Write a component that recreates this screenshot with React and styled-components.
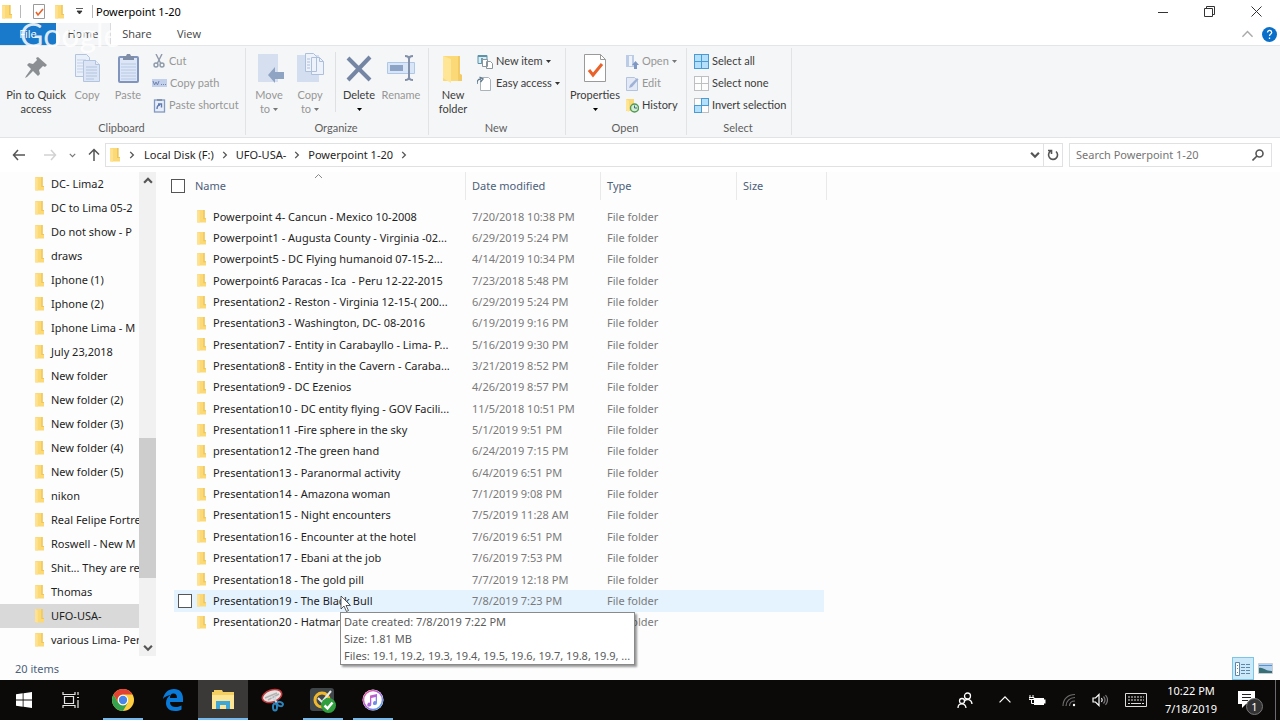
import React, { useState } from 'react';
import styled, { createGlobalStyle } from 'styled-components';

const GlobalStyle = createGlobalStyle`
    * {
        box-sizing: border-box;
    }

    body {
        margin: 0;
        background: #fff;
    }

    body, button, input, table {
        font-family: 'Noto Sans', 'Open Sans', sans-serif;
        font-size: 11px;
        line-height: 14px;
    }

    button {
        padding: 0;
        border: none;
        background: none;
        color: inherit;
    }

    a {
        color: inherit;
        text-decoration: none;
    }
`;

const Window = styled.div`
    display: flex;
    flex-direction: column;
    min-height: 100vh;
    color: #1f1f1f;
    background: #fdfdfd;
`;

/* ---------- title bar ---------- */

const TitleBar = styled.header`
    display: flex;
    align-items: center;
    height: 23px;
    padding-left: 2px;
    background: #fff;
`;

const QuickAccess = styled.div`
    display: flex;
    align-items: center;
    height: 23px;

    button {
        display: flex;
        align-items: center;
        justify-content: center;
        width: 20px;
        height: 22px;
    }
`;

const TitleDivider = styled.span`
    width: 1px;
    height: 13px;
    margin: 0 ${({ $space }) => $space}px;
    background: #b8b8b8;
`;

const WindowTitle = styled.h1`
    flex: 1;
    margin: 0;
    font-size: 11px;
    font-weight: 400;
    color: #000;
`;

const WindowButton = styled.button`
    display: flex;
    align-items: center;
    justify-content: center;
    width: 47px;
    height: 23px;
`;

const TabBar = styled.nav`
    position: relative;
    display: flex;
    align-items: stretch;
    height: 23px;
    background: #fff;
    border-bottom: 1px solid #e4e5e6;
`;

const Tab = styled.button`
    width: ${({ $file }) => ($file ? '56px' : '52px')};
    background: ${({ $file }) => ($file ? '#1979ca' : 'transparent')};
    color: ${({ $file }) => ($file ? '#fff' : '#444')};
    font-family: 'Open Sans', sans-serif;

    &[aria-selected='true'] {
        width: 55px;
        background: #f5f6f7;
        border-right: 1px solid #dadbdc;
    }
`;

const TabSpacer = styled.div`
    flex: 1;
`;

const HelpButton = styled.button`
    display: flex;
    align-items: center;
    justify-content: center;
    width: 22px;
`;

const Watermark = styled.div`
    position: absolute;
    top: -4px;
    left: 20px;
    z-index: 2;
    font-family: Lato, sans-serif;
    font-size: 32px;
    line-height: 32px;
    color: rgba(255, 255, 255, 0.85);
    pointer-events: none;
`;

/* ---------- ribbon ---------- */

const Ribbon = styled.section`
    display: flex;
    height: 92px;
    background: #f5f6f7;
    border-bottom: 1px solid #e2e3e4;

    button, div {
        font-family: Lato, sans-serif;
    }
`;

const RibbonGroup = styled.div`
    display: flex;
    flex-direction: column;
    justify-content: space-between;
    min-width: ${({ $width }) => $width}px;
    margin: 2px 0;
    padding: 2px 0 0 2px;
    border-right: 1px solid #e2e3e4;
`;

const GroupBody = styled.div`
    display: flex;
    align-items: flex-start;
`;

const GroupLabel = styled.div`
    margin-right: 4px;
    text-align: center;
    color: #5e5e5e;
`;

const BigButton = styled.button`
    display: flex;
    flex-direction: column;
    align-items: center;
    width: ${({ $width }) => $width}px;
    white-space: nowrap;
    color: #3c3c3c;

    svg {
        margin: 3px 0 5px;
    }

    &:disabled {
        color: #969696;
    }
`;

const ButtonLine = styled.span`
    display: flex;
    align-items: center;
    justify-content: center;
    gap: 3px;
    height: 14px;

    svg {
        margin: 0;
    }
`;

const GroupDivider = styled.span`
    width: 1px;
    height: 60px;
    margin: 2px 5px 0;
    background: #dfe0e2;
`;

const SmallButtons = styled.div`
    display: flex;
    flex-direction: column;
    align-items: flex-start;
    padding-left: ${({ $indent }) => $indent || 0}px;
`;

const SmallButton = styled.button`
    display: flex;
    align-items: center;
    gap: 3px;
    height: 22px;
    white-space: nowrap;
    color: #3c3c3c;

    &:disabled {
        color: #969696;
    }
`;

/* ---------- address bar ---------- */

const AddressRow = styled.div`
    display: flex;
    align-items: center;
    height: 34px;
    padding-right: 8px;
    background: #fff;
`;

const NavButton = styled.button`
    display: flex;
    align-items: center;
    justify-content: center;
    width: ${({ $width }) => $width}px;
    height: 24px;
`;

const AddressBox = styled.div`
    display: flex;
    flex: 1;
    align-items: center;
    height: 24px;
    padding: 0 0 0 4px;
    border: 1px solid #e0e1e3;
`;

const Crumbs = styled.ol`
    display: flex;
    flex: 1;
    align-items: center;
    margin: 0;
    padding: 0;
    list-style: none;

    li {
        display: flex;
        align-items: center;
    }
`;

const RefreshButton = styled(NavButton)`
    border: 1px solid #e0e1e3;
    border-left: none;
`;

const SearchBox = styled.label`
    display: flex;
    align-items: center;
    width: 203px;
    height: 24px;
    margin-left: 6px;
    padding: 0 7px 0 6px;
    border: 1px solid #e0e1e3;

    input {
        flex: 1;
        min-width: 0;
        padding: 0;
        border: none;
        outline: none;
        background: transparent;
    }

    input::placeholder {
        color: #757575;
        opacity: 1;
    }
`;

/* ---------- folders pane ---------- */

const Main = styled.main`
    display: flex;
    flex: 1;
    align-items: flex-start;
`;

const FolderPane = styled.nav`
    width: 139px;
    overflow: hidden;
`;

const FolderLink = styled.a`
    display: flex;
    align-items: center;
    gap: 7px;
    height: 24px;
    padding-left: 35px;
    white-space: nowrap;
    background: ${({ $active }) => ($active ? '#d9d9d9' : 'transparent')};

    svg {
        flex: none;
    }
`;

const ScrollTrack = styled.div`
    display: flex;
    flex-direction: column;
    width: 17px;
    height: 484px;
    background: #f1f1f1;

    button {
        display: flex;
        align-items: center;
        justify-content: center;
        height: 17px;
    }
`;

const ScrollSpace = styled.div`
    flex: ${({ $share }) => $share};
    background: ${({ $thumb }) => ($thumb ? '#cdcdcd' : 'transparent')};
`;

/* ---------- file list ---------- */

const FileArea = styled.section`
    flex: 1;
    padding-left: 15px;
`;

const FileTable = styled.table`
    width: 656px;
    height: 461px;
    table-layout: fixed;
    border-collapse: separate;
    border-spacing: 0;
`;

const HeadCell = styled.th`
    position: relative;
    width: ${({ $width }) => $width}px;
    height: 34px;
    padding: 0 0 6px;
    font-weight: 400;
    text-align: left;
    color: #4c607a;
`;

const HeadInner = styled.div`
    display: flex;
    align-items: center;
    gap: 10px;
    height: 28px;
    padding-left: ${({ $first }) => ($first ? 0 : 6)}px;
    border-right: 1px solid #e9e9e9;
`;

const SortMark = styled.span`
    position: absolute;
    top: 0;
    left: 0;
    display: flex;
    justify-content: center;
    width: 100%;
`;

const CheckBox = styled.input`
    appearance: none;
    flex: none;
    width: 14px;
    height: 14px;
    margin: 0;
    border: 1px solid #555;
    background: #fff;
`;

const FileRow = styled.tr`
    td {
        padding: 0 0 0 6px;
        white-space: nowrap;
        color: #7a7a7a;
        background: ${({ $hover }) => ($hover ? '#e5f3ff' : 'transparent')};
        background-clip: padding-box;
    }

    td:first-child {
        position: relative;
        z-index: ${({ $hover }) => ($hover ? 1 : 0)};
        padding-left: 4px;
        border-left: 3px solid transparent;
        color: #1f1f1f;
    }

    td:last-child {
        border-right: 3px solid transparent;
    }

    input {
        opacity: ${({ $hover }) => ($hover ? 1 : 0)};
    }
`;

const FileName = styled.div`
    display: flex;
    align-items: center;
    gap: 5px;

    svg {
        flex: none;
    }

    span {
        padding-left: 2px;
        white-space: pre;
    }
`;

const Tip = styled.div`
    position: absolute;
    top: 22px;
    left: 166px;
    padding: 0 4px 0 3px;
    border: 1px solid #8a8a8a;
    background: #fff;
    box-shadow: 2px 2px 2px rgba(0, 0, 0, 0.4);
    line-height: 17px;
    color: #5c5c5c;
`;

const Pointer = styled.span`
    position: absolute;
    top: 5px;
    left: 166px;
    z-index: 1;
    display: flex;
`;

/* ---------- status bar ---------- */

const StatusBar = styled.footer`
    display: flex;
    align-items: center;
    height: 23px;
    padding: 0 4px 0 15px;
    color: #4c607a;
`;

const StatusText = styled.span`
    flex: 1;
`;

const ViewButton = styled.button`
    display: flex;
    align-items: center;
    justify-content: center;
    width: 22px;
    height: 23px;
    background: ${({ $active }) => ($active ? '#cbe9f8' : 'transparent')};
    border: 1px solid ${({ $active }) => ($active ? '#7cc4e8' : 'transparent')};
`;

/* ---------- taskbar ---------- */

const Taskbar = styled.footer`
    display: flex;
    height: 40px;
    background: #0c0a09;
    color: #fff;
`;

const TaskGroup = styled.div`
    display: flex;
    margin-right: ${({ $gap }) => $gap || 0}px;
`;

const TaskButton = styled.button`
    display: flex;
    flex-direction: column;
    align-items: center;
    justify-content: center;
    position: relative;
    width: ${({ $width }) => $width || 50}px;
    background: ${({ $active }) => ($active ? '#3b3937' : 'transparent')};

    &::after {
        content: '';
        position: absolute;
        right: ${({ $active }) => ($active ? 0 : 5)}px;
        bottom: 0;
        left: ${({ $active }) => ($active ? 0 : 5)}px;
        height: 2px;
        background: ${({ $open }) => ($open ? '#76b9ed' : 'transparent')};
    }
`;

const NotifyButton = styled(TaskButton)`
    padding-right: 7px;
`;

const Clock = styled.time`
    display: flex;
    flex-direction: column;
    align-items: center;
    justify-content: center;
    width: 68px;
    line-height: 18px;
`;

const Badge = styled.span`
    position: absolute;
    right: 12px;
    bottom: 5px;
    width: 17px;
    height: 17px;
    border: 1px solid #777;
    border-radius: 50%;
    background: #333;
    line-height: 15px;
    text-align: center;
`;

const DesktopEdge = styled.span`
    width: 5px;
    border-left: 1px solid #6b6b6b;
`;

/* ---------- icons ---------- */

const Folder = ({ width = 10, height = 14 }) => (
    <svg width={width} height={height} viewBox="0 0 10 14" preserveAspectRatio="none">
        <path d="M0 0h8.500v9H10v4.500H0z" fill="#fbd977" />
        <path d="M0 0l3 1.200V14L0 12.800z" fill="#ffe291" />
        <path d="M7 0h1.500v9H10v1H7z" fill="#efc55a" />
    </svg>
);

const Chevron = ({ dir = 'right', size = 8, color = '#555', stroke = 1.5 }) => {
    const paths = {
        right: 'M2.5 1L6 4.5 2.5 8',
        down: 'M1 2.5L4.5 6 8 2.5',
        up: 'M1 6L4.5 2.5 8 6',
    };
    return (
        <svg width={size} height={size} viewBox="0 0 9 9" fill="none" stroke={color} strokeWidth={stroke}>
            <path d={paths[dir]} />
        </svg>
    );
};

const Caret = ({ color = '#333' }) => (
    <svg width="5" height="3" viewBox="0 0 5 3">
        <path d="M0 0h5L2.5 3z" fill={color} />
    </svg>
);

const PinIcon = () => (
    <svg width="30" height="30" viewBox="0 0 30 30">
        <path d="M17 4l9 8-2 2-2-1-4 4 1 4-2 2-5-5-6 6-2 1 1-2 5-7-4-4 2-2 4 1 4-4-1-2z" fill="#8b8f93" />
    </svg>
);

const CopyIcon = () => (
    <svg width="30" height="30" viewBox="0 0 30 30" fill="#eaf0fa" stroke="#b3c4de">
        <path d="M3.500 1.500h11l3 3v19h-14z" />
        <path d="M5 7h9M5 10h9M5 13h8M5 16h8M5 19h8" stroke="#c3d1e8" />
        <path d="M11.500 7.500h12l4 4v17h-16z" fill="#dbe5f5" />
        <path d="M23.500 7.500v4h4M14 14h11M14 17h11M14 20h11M14 23h11M14 26h8" />
    </svg>
);

const PasteIcon = () => (
    <svg width="30" height="30" viewBox="0 0 30 30">
        <rect x="6" y="4" width="19" height="25" rx="1" fill="#dde6f6" stroke="#8094bd" strokeWidth="2" />
        <path d="M10 3h3l1-2h3l1 2h3v4H10z" fill="#7f8da6" />
        <path d="M8 11h15M8 14h15M8 17h15M8 20h15M8 23h15M8 26h15" stroke="#b8c9e6" />
    </svg>
);

const CutIcon = () => (
    <svg width="14" height="14" viewBox="0 0 14 14" fill="none" stroke="#8f9aab" strokeWidth="1.4">
        <path d="M4 0l5 10M10 0L5 10" />
        <circle cx="4" cy="11" r="2" />
        <circle cx="10" cy="11" r="2" />
    </svg>
);

const CopyPathIcon = () => (
    <svg width="15" height="14" viewBox="0 0 15 14">
        <path d="M0 3h15v8H0z" fill="#c3d0ec" />
        <path d="M1 5l1.500 4L4 6l1.500 3L7 5M9 8.500h1M11 8.500h1M13 8.500h1" fill="none" stroke="#7185ac" />
    </svg>
);

const ShortcutIcon = () => (
    <svg width="14" height="15" viewBox="0 0 14 15">
        <rect x="2.500" y="2" width="10" height="12" fill="#e8eef9" stroke="#8297c2" strokeWidth="1.300" />
        <path d="M5 1h5v2H5z" fill="#8494b0" />
        <path d="M5 11c0-3 1-4 3-4M6 6h3.500v3.500" fill="none" stroke="#5f79b2" strokeWidth="1.400" />
    </svg>
);

const MoveIcon = () => (
    <svg width="30" height="30" viewBox="0 0 30 30">
        <path d="M4 1h20v28H4z" fill="#d5dfef" />
        <path d="M14 22l7-8v5h9v7h-9v4z" fill="#8fa3c2" />
    </svg>
);

const CopyToIcon = () => (
    <svg width="30" height="30" viewBox="0 0 30 30">
        <path d="M2 2h22v27H2z" fill="#d3def0" />
        <path d="M10.500.5h8l3 3v15h-11zM16.500 4.500h8l4 4v13h-12z" fill="#edf2fb" stroke="#aebfdb" />
        <path d="M24.500 4.500v4h4M12 6h3M12 9h3M12 12h3M12 15h3" fill="none" stroke="#aebfdb" />
    </svg>
);

const DeleteIcon = () => (
    <svg width="30" height="30" viewBox="0 0 30 30">
        <path d="M4 5l22 22M26 4L4 27" stroke="#7486a3" strokeWidth="4" />
    </svg>
);

const RenameIcon = () => (
    <svg width="30" height="30" viewBox="0 0 30 30">
        <path d="M1.500 9.500h27v11h-27z" fill="#d9e6f7" stroke="#b0c8e8" />
        <path d="M4 12h13v6H4z" fill="#8da4c7" />
        <path d="M19 3c3 0 4 1 4 3v18c0 2-1 3-4 3M27 3c-3 0-4 1-4 3M27 27c-3 0-4-1-4-3" fill="none" stroke="#8291a9" strokeWidth="2" />
    </svg>
);

const BigFolder = () => (
    <svg width="30" height="30" viewBox="0 0 30 30">
        <path d="M5 3h17v18l2 1v6H5z" fill="#fbd977" />
        <path d="M5 3l8 3v24l-8-5z" fill="#ffe596" />
        <path d="M20 3h2v18l2 1v6h-4z" fill="#f3cb66" />
    </svg>
);

const PropertiesIcon = () => (
    <svg width="30" height="30" viewBox="0 0 30 30">
        <path d="M4.500 1.500h16l5 5v22h-21z" fill="#fff" stroke="#9a9a9a" />
        <path d="M20.500 1.500v5h5" fill="none" stroke="#9a9a9a" />
        <path d="M9 17l4 5 9-11" fill="none" stroke="#e8622a" strokeWidth="3" />
    </svg>
);

const NewItemIcon = () => (
    <svg width="16" height="15" viewBox="0 0 16 15">
        <path d="M1 1.500h9v8H1z" fill="#d7edf5" stroke="#5d93a8" />
        <path d="M1 1h9v2H1z" fill="#5d93a8" />
        <path d="M4 4h2v6H4z" fill="#6d9eb0" />
        <path d="M5.500 5.500h5v7h-5zM9.500 7.500h4l2 2v5h-6z" fill="#fff" stroke="#8b969c" />
    </svg>
);

const EasyIcon = () => (
    <svg width="16" height="15" viewBox="0 0 16 15">
        <path d="M3.500 1.500h8l2 2v11h-10z" fill="#fff" stroke="#a9b3ba" />
        <path d="M0 8c0-4 1-5 4-5M2.500 1L6 3 3.500 6" fill="none" stroke="#607a8e" strokeWidth="1.400" />
    </svg>
);

const OpenIcon = () => (
    <svg width="13" height="15" viewBox="0 0 13 15">
        <path d="M0 1h8v12H0z" fill="#bccbe6" />
        <path d="M3 2h3v10H3z" fill="#eef3fb" />
        <path d="M9.500 7l3.500 4h-2v4H8v-4H6z" fill="#8097c4" />
    </svg>
);

const EditIcon = () => (
    <svg width="13" height="15" viewBox="0 0 13 15">
        <path d="M.5 1.500h8l3 3v10H.5z" fill="#e3eaf6" stroke="#b4c3de" />
        <path d="M3 12l1-3 7-7 1.500 1.500L6 11z" fill="#9fb2d6" />
    </svg>
);

const HistoryIcon = () => (
    <svg width="13" height="15" viewBox="0 0 13 15">
        <path d="M0 1h8v12H0z" fill="#fbd977" />
        <path d="M0 1l3 2v11l-3-2z" fill="#ffe596" />
        <circle cx="8.500" cy="10" r="4" fill="#d4ecd2" stroke="#4f9a53" strokeWidth="1.400" />
        <path d="M8.500 7.500V10h2.500" fill="none" stroke="#3d6b8c" />
    </svg>
);

const GridIcon = ({ mode }) => {
    const blue = { fill: '#b4e0fb', stroke: '#4a9bd4' };
    const grey = { fill: '#fdfdfd', stroke: '#bdbfc1' };
    const cells = {
        all: [blue, blue, blue, blue],
        none: [grey, grey, grey, grey],
        invert: [grey, blue, blue, grey],
    }[mode];
    return (
        <svg width="15" height="15" viewBox="0 0 15 15">
            <rect x=".5" y=".5" width="7" height="7" {...cells[0]} />
            <rect x="7.500" y="7.500" width="7" height="7" {...cells[3]} />
            <rect x="7.500" y=".5" width="7" height="7" {...cells[1]} />
            <rect x=".5" y="7.500" width="7" height="7" {...cells[2]} />
        </svg>
    );
};

const Arrow = ({ dir, color = '#555' }) => (
    <svg width="14" height="14" viewBox="0 0 14 14" fill="none" stroke={color} strokeWidth="1.500">
        {dir === 'left' && <path d="M13 7H1.500M6 2L1.500 7 6 12" />}
        {dir === 'right' && <path d="M1 7h11.500M8 2l4.500 5L8 12" />}
        {dir === 'up' && <path d="M7 13V1.500M2 6.500l5-5 5 5" />}
    </svg>
);

const CursorIcon = () => (
    <svg width="12" height="18" viewBox="0 0 12 18">
        <path d="M1 1v13l3-3 2.500 5.500 2-1L6 10.500h4.500z" fill="#fff" stroke="#333" strokeWidth=".8" />
    </svg>
);

const WindowsIcon = () => (
    <svg width="16" height="16" viewBox="0 0 16 16" fill="#fff">
        <path d="M0 2.300l6.700-1v6.300H0zM7.500 1.200L16 0v7.600H7.500zM0 8.400h6.700v6.300l-6.700-1zM7.500 8.400H16V16l-8.500-1.200z" />
    </svg>
);

const TaskViewIcon = () => (
    <svg width="18" height="16" viewBox="0 0 18 16" fill="none" stroke="#e6e6e6" strokeWidth="1.200">
        <path d="M2.500 4.500h9v7h-9zM1 0v2.500h12V0M1 16v-2.500h12V16M16 0v3M16 8v8M15 5.500h2" />
    </svg>
);

const ChromeIcon = () => (
    <svg width="22" height="22" viewBox="0 0 22 22">
        <circle cx="11" cy="11" r="11" fill="#ffcd40" />
        <path d="M1.500 5.500A11 11 0 0 1 20.500 5.500H11a5.500 5.500 0 0 0-4.800 8.200z" fill="#e34133" />
        <path d="M1.500 5.500A11 11 0 0 0 11 22l4.800-8.300a5.500 5.500 0 0 1-9.600 0z" fill="#33a34f" />
        <circle cx="11" cy="11" r="5.200" fill="#fff" />
        <circle cx="11" cy="11" r="4.200" fill="#4a86ea" />
    </svg>
);

const EdgeIcon = () => (
    <svg width="20" height="22" viewBox="0 0 20 22">
        <path d="M0 10C1 4 5 0 11 0c6 0 9 4 9 10v3H7c0 4 3 5 6 5 2 0 4-.6 5.500-1.500v4C17 21.500 14 22 12 22 6 22 3 18.500 3 14c0-4 2-6.500 5-8C4 6.500 1.500 8 0 10zm7-1h7c0-3-1-4.500-3.500-4.500S7 6.500 7 9z" fill="#0a7ad8" />
    </svg>
);

const ExplorerIcon = () => (
    <svg width="22" height="20" viewBox="0 0 22 20">
        <path d="M0 2h2V0h8l1 2h11v17H0z" fill="#f5ce62" />
        <path d="M0 5h22v14H0z" fill="#fde596" />
        <path d="M4 19v-8h14v8h-4v-4H8v4z" fill="#3fa6d8" />
    </svg>
);

const SnipIcon = () => (
    <svg width="24" height="24" viewBox="0 0 24 24" fill="none">
        <ellipse cx="11" cy="8" rx="10" ry="6" fill="#e9e4e4" stroke="#c33a3c" strokeWidth="1.500" transform="rotate(-18 11 8)" />
        <path d="M4 10l12-5M7 12l11-6" stroke="#b5b0b0" strokeWidth="1.500" />
        <path d="M10 9l7 6M14 8l1 7" stroke="#cfd6db" strokeWidth="1.500" />
        <ellipse cx="14" cy="19" rx="2" ry="3.500" stroke="#2b86bd" strokeWidth="2" />
        <ellipse cx="19" cy="16" rx="3" ry="2" stroke="#2b86bd" strokeWidth="2" transform="rotate(20 19 16)" />
    </svg>
);

const NortonIcon = () => (
    <svg width="26" height="25" viewBox="0 0 26 25" fill="none">
        <rect width="24" height="23" rx="3" fill="#3f474b" />
        <circle cx="12" cy="12" r="7" stroke="#f0b72c" strokeWidth="3" />
        <path d="M8 10l4 4 9-11" stroke="#e9e9e9" strokeWidth="2" />
        <circle cx="18.500" cy="17.500" r="7.500" fill="#2f9e3d" />
        <path d="M14.500 17.500l3 3 5-6" stroke="#fff" strokeWidth="2.500" />
    </svg>
);

const ItunesIcon = () => (
    <svg width="22" height="22" viewBox="0 0 22 22">
        <defs>
            <linearGradient id="itunes" x1="0" y1="0" x2="1" y2="1">
                <stop offset="0" stopColor="#f0558c" />
                <stop offset=".5" stopColor="#b061e0" />
                <stop offset="1" stopColor="#38b6ee" />
            </linearGradient>
        </defs>
        <circle cx="11" cy="11" r="10.500" fill="#fff" />
        <circle cx="11" cy="11" r="9.500" fill="none" stroke="url(#itunes)" strokeWidth="1.500" />
        <path d="M8 6.500l7-1.500v9a2 2 0 1 1-1.300-1.800V8L9.300 9v6.500A2 2 0 1 1 8 13.700z" fill="url(#itunes)" />
    </svg>
);

const PeopleIcon = () => (
    <svg width="16" height="17" viewBox="0 0 16 17" fill="none" stroke="#fff" strokeWidth="1.300">
        <circle cx="10.500" cy="4" r="3" />
        <path d="M7.500 9c2-2.500 7-2 7.500 3" />
        <circle cx="5" cy="9" r="2.500" />
        <path d="M1 16c0-5.500 7.500-5.500 8 0" />
    </svg>
);

const BatteryIcon = () => (
    <svg width="17" height="13" viewBox="0 0 17 13">
        <path d="M5 4h10v1.500h1.500v4H15V11H5z" fill="#fff" />
        <path d="M1 1v2M4 1v2M0 3.500h5v2H0zM2.500 5v4.500H5" fill="none" stroke="#fff" />
    </svg>
);

const WifiIcon = () => (
    <svg width="14" height="14" viewBox="0 0 14 14" fill="none" stroke="#6d6d6d" strokeWidth="1.200">
        <path d="M1 13C1 6 6 1.500 13 1.500M4 13c0-5 4-8.500 9-8.500M7.500 13c0-3 2-5 5.500-5" />
        <circle cx="12" cy="12" r="1.200" fill="#fff" stroke="none" />
    </svg>
);

const VolumeIcon = () => (
    <svg width="16" height="14" viewBox="0 0 16 14" fill="none" stroke="#fff" strokeWidth="1.200">
        <path d="M1 5h2.500L7 1.500v11L3.500 9H1z" />
        <path d="M9.500 5q1.500 2 0 4" />
        <path d="M11.500 3.500q3 3.500 0 7M13.500 2q4 5 0 10" stroke="#777" />
    </svg>
);

const KeyboardIcon = () => (
    <svg width="22" height="14" viewBox="0 0 22 14" fill="none" stroke="#ddd">
        <path d="M.5.500h21v13H.5z" />
        <path d="M3 4h16M3 7h16" strokeDasharray="2 1" />
        <path d="M3 10.500h2M6 10.500h10M17 10.500h2" />
    </svg>
);

const ActionIcon = () => (
    <svg width="18" height="18" viewBox="0 0 18 18">
        <path d="M0 0h17v13H8l-4 4v-4H0z" fill="#fff" />
        <path d="M4 3.500h9M4 6.500h9M4 9.500h6" stroke="#222" />
    </svg>
);

/* ---------- data ---------- */

const folders = [
    'DC- Lima2',
    'DC to Lima 05-2',
    'Do not show - P',
    'draws',
    'Iphone (1)',
    'Iphone (2)',
    'Iphone Lima - M',
    'July 23,2018',
    'New folder',
    'New folder (2)',
    'New folder (3)',
    'New folder (4)',
    'New folder (5)',
    'nikon',
    'Real Felipe Fortre',
    'Roswell - New M',
    'Shit... They are re',
    'Thomas',
    'UFO-USA-',
    'various Lima- Per',
];

const files = [
    ['Powerpoint 4- Cancun - Mexico 10-2008', '7/20/2018 10:38 PM'],
    ['Powerpoint1 - Augusta County - Virginia -02...', '6/29/2019 5:24 PM'],
    ['Powerpoint5 - DC Flying humanoid 07-15-2...', '4/14/2019 10:34 PM'],
    ['Powerpoint6 Paracas - Ica  - Peru 12-22-2015', '7/23/2018 5:48 PM'],
    ['Presentation2 - Reston - Virginia 12-15-( 200...', '6/29/2019 5:24 PM'],
    ['Presentation3 - Washington, DC- 08-2016', '6/19/2019 9:16 PM'],
    ['Presentation7 - Entity in Carabayllo - Lima- P...', '5/16/2019 9:30 PM'],
    ['Presentation8 - Entity in the Cavern - Caraba...', '3/21/2019 8:52 PM'],
    ['Presentation9 - DC Ezenios', '4/26/2019 8:57 PM'],
    ['Presentation10 - DC entity flying - GOV Facili...', '11/5/2018 10:51 PM'],
    ['Presentation11 -Fire sphere in the sky', '5/1/2019 9:51 PM'],
    ['presentation12 -The green hand', '6/24/2019 7:15 PM'],
    ['Presentation13 - Paranormal activity', '6/4/2019 6:51 PM'],
    ['Presentation14 - Amazona woman', '7/1/2019 9:08 PM'],
    ['Presentation15 - Night encounters', '7/5/2019 11:28 AM'],
    ['Presentation16 - Encounter at the hotel', '7/6/2019 6:51 PM'],
    ['Presentation17 - Ebani at the job', '7/6/2019 7:53 PM'],
    ['Presentation18 - The gold pill', '7/7/2019 12:18 PM'],
    ['Presentation19 - The Black Bull', '7/8/2019 7:23 PM'],
    ['Presentation20 - Hatman', '7/8/2019 7:25 PM'],
];

const crumbs = ['Local Disk (F:)', 'UFO-USA-', 'Powerpoint 1-20'];

const App = () => {
    const [search, setSearch] = useState('');
    const [hovered, setHovered] = useState(18);

    return (
        <>
            <GlobalStyle />
            <Window>
                <TitleBar>
                    <Folder />
                    <QuickAccess>
                        <TitleDivider $space={8} />
                        <button aria-label="Properties">
                            <svg width="14" height="15" viewBox="0 0 14 15">
                                <path d="M1.500.5h11v14h-11z" fill="#fff" stroke="#9a9a9a" />
                                <path d="M4 8l2 3 5-6" fill="none" stroke="#e8622a" strokeWidth="1.600" />
                            </svg>
                        </button>
                        <button aria-label="New folder"><Folder width={9} /></button>
                        <button aria-label="Customize">
                            <svg width="7" height="7" viewBox="0 0 7 7">
                                <path d="M0 .5h7M1 3h5L3.500 6z" fill="#333" stroke="#333" strokeWidth=".8" />
                            </svg>
                        </button>
                        <TitleDivider $space={3} />
                    </QuickAccess>
                    <WindowTitle>Powerpoint 1-20</WindowTitle>
                    <WindowButton aria-label="Minimize">
                        <svg width="10" height="10" stroke="#333"><path d="M0 5.500h10" /></svg>
                    </WindowButton>
                    <WindowButton aria-label="Restore">
                        <svg width="11" height="11" fill="none" stroke="#333">
                            <path d="M.5 2.500h8v8h-8zM2.500 2.500v-2h8v8h-2" />
                        </svg>
                    </WindowButton>
                    <WindowButton aria-label="Close">
                        <svg width="11" height="11" stroke="#333"><path d="M.5.500l10 10M10.500.5l-10 10" /></svg>
                    </WindowButton>
                </TitleBar>

                <TabBar role="tablist">
                    <Tab $file role="tab">File</Tab>
                    <Tab role="tab" aria-selected="true">Home</Tab>
                    <Tab role="tab">Share</Tab>
                    <Tab role="tab">View</Tab>
                    <TabSpacer />
                    <HelpButton aria-label="Collapse ribbon">
                        <Chevron dir="up" size={13} color="#aaa" stroke={1} />
                    </HelpButton>
                    <HelpButton aria-label="Help">
                        <svg width="15" height="15" viewBox="0 0 15 15">
                            <circle cx="7.500" cy="7.500" r="7.500" fill="#0a6fc8" />
                            <path d="M5.500 5.500c0-3 4.200-2.500 4.200 0C9.700 7 7.500 7 7.500 9M7.500 10.500V12" fill="none" stroke="#fff" strokeWidth="1.300" />
                        </svg>
                    </HelpButton>
                    <Watermark>Google</Watermark>
                </TabBar>

                <Ribbon>
                    <RibbonGroup $width={246}>
                        <GroupBody>
                            <BigButton $width={68}>
                                <PinIcon />
                                <ButtonLine>Pin to Quick</ButtonLine>
                                <ButtonLine>access</ButtonLine>
                            </BigButton>
                            <BigButton $width={34} disabled>
                                <CopyIcon />
                                <ButtonLine>Copy</ButtonLine>
                            </BigButton>
                            <BigButton $width={48} disabled>
                                <PasteIcon />
                                <ButtonLine>Paste</ButtonLine>
                            </BigButton>
                            <SmallButtons>
                                <SmallButton disabled><CutIcon />Cut</SmallButton>
                                <SmallButton disabled><CopyPathIcon />Copy path</SmallButton>
                                <SmallButton disabled><ShortcutIcon />Paste shortcut</SmallButton>
                            </SmallButtons>
                        </GroupBody>
                        <GroupLabel>Clipboard</GroupLabel>
                    </RibbonGroup>

                    <RibbonGroup $width={183}>
                        <GroupBody>
                            <BigButton $width={42} disabled>
                                <MoveIcon />
                                <ButtonLine>Move</ButtonLine>
                                <ButtonLine>to <Caret color="#777" /></ButtonLine>
                            </BigButton>
                            <BigButton $width={40} disabled>
                                <CopyToIcon />
                                <ButtonLine>Copy</ButtonLine>
                                <ButtonLine>to <Caret color="#777" /></ButtonLine>
                            </BigButton>
                            <GroupDivider />
                            <BigButton $width={36}>
                                <DeleteIcon />
                                <ButtonLine>Delete</ButtonLine>
                                <ButtonLine><Caret color="#000" /></ButtonLine>
                            </BigButton>
                            <BigButton $width={48} disabled>
                                <RenameIcon />
                                <ButtonLine>Rename</ButtonLine>
                            </BigButton>
                        </GroupBody>
                        <GroupLabel>Organize</GroupLabel>
                    </RibbonGroup>

                    <RibbonGroup $width={137}>
                        <GroupBody>
                            <BigButton $width={44}>
                                <BigFolder />
                                <ButtonLine>New</ButtonLine>
                                <ButtonLine>folder</ButtonLine>
                            </BigButton>
                            <SmallButtons $indent={2}>
                                <SmallButton><NewItemIcon />New item <Caret /></SmallButton>
                                <SmallButton><EasyIcon />Easy access <Caret /></SmallButton>
                            </SmallButtons>
                        </GroupBody>
                        <GroupLabel>New</GroupLabel>
                    </RibbonGroup>

                    <RibbonGroup $width={121}>
                        <GroupBody>
                            <BigButton $width={54}>
                                <PropertiesIcon />
                                <ButtonLine>Properties</ButtonLine>
                                <ButtonLine><Caret color="#000" /></ButtonLine>
                            </BigButton>
                            <SmallButtons $indent={4}>
                                <SmallButton disabled><OpenIcon />Open <Caret color="#777" /></SmallButton>
                                <SmallButton disabled><EditIcon />Edit</SmallButton>
                                <SmallButton><HistoryIcon />History</SmallButton>
                            </SmallButtons>
                        </GroupBody>
                        <GroupLabel>Open</GroupLabel>
                    </RibbonGroup>

                    <RibbonGroup $width={105}>
                        <GroupBody>
                            <SmallButtons $indent={5}>
                                <SmallButton><GridIcon mode="all" />Select all</SmallButton>
                                <SmallButton><GridIcon mode="none" />Select none</SmallButton>
                                <SmallButton><GridIcon mode="invert" />Invert selection</SmallButton>
                            </SmallButtons>
                        </GroupBody>
                        <GroupLabel>Select</GroupLabel>
                    </RibbonGroup>
                </Ribbon>

                <AddressRow>
                    <NavButton $width={38} aria-label="Back"><Arrow dir="left" /></NavButton>
                    <NavButton $width={24} aria-label="Forward"><Arrow dir="right" color="#d2d2d2" /></NavButton>
                    <NavButton $width={20} aria-label="Recent locations"><Chevron dir="down" size={7} color="#777" /></NavButton>
                    <NavButton $width={23} aria-label="Up"><Arrow dir="up" /></NavButton>
                    <AddressBox>
                        <Folder />
                        <Crumbs>
                            <li><NavButton $width={24} aria-label="Drives"><Chevron /></NavButton></li>
                            {crumbs.map((crumb) => (
                                <li key={crumb}>
                                    <a href="#top">{crumb}</a>
                                    <NavButton $width={22} aria-label={`Inside ${crumb}`}><Chevron /></NavButton>
                                </li>
                            ))}
                        </Crumbs>
                        <NavButton $width={16} aria-label="Previous locations">
                            <Chevron dir="down" size={10} stroke={2} />
                        </NavButton>
                    </AddressBox>
                    <RefreshButton $width={19} aria-label="Refresh">
                        <svg width="12" height="12" viewBox="0 0 12 12" fill="none" stroke="#555" strokeWidth="1.600">
                            <path d="M9 2.500a4.500 4.500 0 1 1-5.500-.3M1 1.500h3.500V5" />
                        </svg>
                    </RefreshButton>
                    <SearchBox>
                        <input
                            type="text"
                            aria-label="Search Powerpoint 1-20"
                            placeholder="Search Powerpoint 1-20"
                            value={search}
                            onChange={(e) => setSearch(e.target.value)}
                        />
                        <svg width="12" height="12" viewBox="0 0 12 12" fill="none" stroke="#555" strokeWidth="1.600">
                            <circle cx="7.500" cy="4.500" r="3.500" />
                            <path d="M5 7l-4.500 4.500" />
                        </svg>
                    </SearchBox>
                </AddressRow>

                <Main>
                    <FolderPane>
                        {folders.map((name) => (
                            <FolderLink key={name} href="#top" $active={name === 'UFO-USA-'}>
                                <Folder width={9} />
                                {name}
                            </FolderLink>
                        ))}
                    </FolderPane>
                    <ScrollTrack>
                        <button aria-label="Scroll up"><Chevron dir="up" size={10} stroke={2} /></button>
                        <ScrollSpace $share={249} />
                        <ScrollSpace $share={140} $thumb />
                        <ScrollSpace $share={61} />
                        <button aria-label="Scroll down"><Chevron dir="down" size={10} stroke={2} /></button>
                    </ScrollTrack>

                    <FileArea>
                        <FileTable>
                            <thead>
                                <tr>
                                    <HeadCell $width={295}>
                                        <HeadInner $first>
                                            <CheckBox type="checkbox" aria-label="Select all files" />
                                            Name
                                        </HeadInner>
                                        <SortMark><Chevron dir="up" size={9} color="#888" stroke={1} /></SortMark>
                                    </HeadCell>
                                    <HeadCell $width={135}><HeadInner>Date modified</HeadInner></HeadCell>
                                    <HeadCell $width={136}><HeadInner>Type</HeadInner></HeadCell>
                                    <HeadCell $width={90}><HeadInner>Size</HeadInner></HeadCell>
                                </tr>
                            </thead>
                            <tbody>
                                {files.map(([name, date], index) => (
                                    <FileRow
                                        key={name}
                                        $hover={hovered === index}
                                        onMouseEnter={() => setHovered(index)}
                                    >
                                        <td>
                                            <FileName>
                                                <CheckBox type="checkbox" aria-label={name} />
                                                <Folder width={9} height={13} />
                                                <span>{name}</span>
                                            </FileName>
                                            {hovered === index && (
                                                <>
                                                    <Pointer><CursorIcon /></Pointer>
                                                    <Tip role="tooltip">
                                                        <div>Date created: 7/8/2019 7:22 PM</div>
                                                        <div>Size: 1.81 MB</div>
                                                        <div>Files: 19.1, 19.2, 19.3, 19.4, 19.5, 19.6, 19.7, 19.8, 19.9, ...</div>
                                                    </Tip>
                                                </>
                                            )}
                                        </td>
                                        <td>{date}</td>
                                        <td>File folder</td>
                                        <td />
                                    </FileRow>
                                ))}
                            </tbody>
                        </FileTable>
                    </FileArea>
                </Main>

                <StatusBar>
                    <StatusText>20 items</StatusText>
                    <ViewButton $active aria-label="Details view">
                        <svg width="16" height="14" viewBox="0 0 16 14" fill="none" stroke="#5d86a8">
                            <path d="M.5.500h4v13h-4z" fill="#fff" />
                            <path d="M2 3.500h1M2 6.500h1M2 10.500h1M6 2.500h4M11 2.500h4M6 5.500h4M11 5.500h4M6 8.500h4M11 8.500h4M6 11.500h4M11 11.500h4" />
                        </svg>
                    </ViewButton>
                    <ViewButton aria-label="Large icons view">
                        <svg width="15" height="11" viewBox="0 0 15 11">
                            <path d="M.5.500h14v10H.5z" fill="#b5d3ee" stroke="#c9ced3" />
                            <path d="M1 5c4-1 6 3 13 3v2H1z" fill="#376f77" />
                            <path d="M1 2h13v1H1z" fill="#5b92cc" />
                        </svg>
                    </ViewButton>
                </StatusBar>

                <Taskbar>
                    <TaskGroup $gap={4}>
                        <TaskButton $width={47} aria-label="Start"><WindowsIcon /></TaskButton>
                        <TaskButton $width={47} aria-label="Task view"><TaskViewIcon /></TaskButton>
                    </TaskGroup>
                    <TaskGroup>
                        <TaskButton $open aria-label="Chrome"><ChromeIcon /></TaskButton>
                        <TaskButton aria-label="Edge"><EdgeIcon /></TaskButton>
                        <TaskButton $open $active aria-label="File Explorer"><ExplorerIcon /></TaskButton>
                        <TaskButton aria-label="Snipping Tool"><SnipIcon /></TaskButton>
                        <TaskButton $open aria-label="Norton"><NortonIcon /></TaskButton>
                        <TaskButton $open aria-label="iTunes"><ItunesIcon /></TaskButton>
                    </TaskGroup>
                    <TabSpacer />
                    <TaskButton $width={48} aria-label="People"><PeopleIcon /></TaskButton>
                    <TaskButton $width={32} aria-label="Hidden icons"><Chevron dir="up" size={14} color="#fff" stroke={0.8} /></TaskButton>
                    <TaskButton $width={32} aria-label="Battery"><BatteryIcon /></TaskButton>
                    <TaskButton $width={32} aria-label="Network"><WifiIcon /></TaskButton>
                    <TaskButton $width={30} aria-label="Volume"><VolumeIcon /></TaskButton>
                    <TaskButton $width={42} aria-label="Keyboard"><KeyboardIcon /></TaskButton>
                    <Clock>
                        <span>10:22 PM</span>
                        <span>7/18/2019</span>
                    </Clock>
                    <NotifyButton $width={50} aria-label="Notifications">
                        <ActionIcon />
                        <Badge>1</Badge>
                    </NotifyButton>
                    <DesktopEdge />
                </Taskbar>
            </Window>
        </>
    );
};

export default App;
